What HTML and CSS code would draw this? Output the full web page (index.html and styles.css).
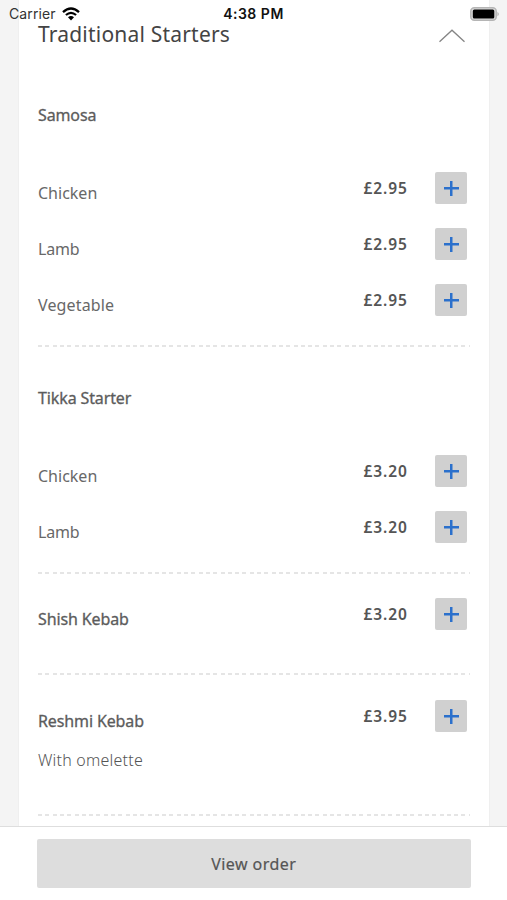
FILE: index.html
```html
<!DOCTYPE html>
<html lang="en">
<head>
<meta charset="utf-8">
<title>Menu</title>
<link rel="stylesheet" href="styles.css">
</head>
<body>
<div class="screen">
  <header class="status">
    <div class="carrier"><span class="carrier-name">Carrier</span>
      <svg class="wifi" viewBox="0 0 18 14" width="18" height="14"><path d="M1 5.2Q9-2.2 17 5.2" fill="none" stroke="#000" stroke-width="2.3"/><path d="M3.9 8Q9 3.6 14.1 8" fill="none" stroke="#000" stroke-width="2.2"/><path d="M6 10.2Q9 7.6 12 10.2L9 13.4Z"/></svg>
    </div>
    <time class="clock">4:38 PM</time>
    <svg class="battery" viewBox="0 0 30 14" width="30" height="14"><rect x=".8" y=".8" width="25.4" height="12.4" rx="3.5" fill="#ddd" stroke="#b5b5b5" stroke-width="1.5"/><rect x="2.8" y="2.6" width="21.5" height="8.8" rx="1.5"/><path d="M27.5 4.7Q30 7 27.5 9.3Z" fill="#aaa"/></svg>
  </header>
  <main class="card">
    <div class="heading"><h1 class="heading-text">Traditional Starters</h1>
      <svg class="chevron" viewBox="0 0 28 14" width="28" height="14"><path d="M1.5 12.8L14 1.2L26.5 12.8" fill="none" stroke="#858585" stroke-width="1.3"/></svg>
    </div>
    <section class="group">
      <h2 class="title">Samosa</h2>
      <div class="row"><span class="name">Chicken</span><span class="price">£2.95</span><button class="add" aria-label="Add"></button></div>
      <div class="row"><span class="name lamb">Lamb</span><span class="price">£2.95</span><button class="add" aria-label="Add"></button></div>
      <div class="row"><span class="name vegetable">Vegetable</span><span class="price">£2.95</span><button class="add" aria-label="Add"></button></div>
    </section>
    <section class="group">
      <h2 class="title">Tikka Starter</h2>
      <div class="row"><span class="name">Chicken</span><span class="price">£3.20</span><button class="add" aria-label="Add"></button></div>
      <div class="row"><span class="name lamb">Lamb</span><span class="price">£3.20</span><button class="add" aria-label="Add"></button></div>
    </section>
    <section class="group single">
      <div class="row"><span class="name strong">Shish Kebab</span><span class="price">£3.20</span><button class="add" aria-label="Add"></button></div>
    </section>
    <section class="group single described">
      <div class="row"><span class="name strong">Reshmi Kebab</span><span class="price">£3.95</span><button class="add" aria-label="Add"></button></div>
      <p class="description">With omelette</p>
    </section>
  </main>
  <footer class="footer"><button class="order">View order</button></footer>
</div>
</body>
</html>
```
FILE: styles.css
```css
* { box-sizing: border-box; }
body { margin: 0; background: #f4f4f4; font-family: "Noto Sans", sans-serif; }
h1, h2, p { margin: 0; font-weight: 400; }
button { border: 0; padding: 0; font: inherit; }
.screen { position: relative; width: 507px; height: 900px; overflow: hidden; display: flex; flex-direction: column; }
.status { position: absolute; inset: 0 0 auto; height: 27px; padding: 0 7px 0 9px; display: grid; grid-template-columns: 1fr auto 1fr; align-items: center; font-family: Inter, sans-serif; color: #111; }
.carrier { display: flex; align-items: center; gap: 6px; }
.carrier-name { font-size: 14px; letter-spacing: .12px; color: #333; }
.clock { font-size: 14px; letter-spacing: .5px; font-weight: 600; margin-right: 2px; }
.battery { justify-self: end; }
.card { flex: none; width: 472px; height: 826px; margin-left: 18px; padding: 0 19px; background: #fff; border: solid #efefef; border-width: 0 1px; overflow: hidden; }
.heading { height: 64px; padding: 18px 4px 0 0; display: flex; justify-content: space-between; align-items: flex-start; color: #444; }
.heading-text { font-size: 21px; letter-spacing: .2px; line-height: 32px; }
.chevron { margin-top: 11px; }
.group { height: 283px; padding-top: 24px; background: repeating-linear-gradient(90deg, #e5e5e5 0 4px, transparent 4px 7.3px) bottom / 100% 2px no-repeat; }
.group + .group { height: 227px; }
.title { height: 54px; margin-bottom: 18px; line-height: 54px; font-size: 16px; letter-spacing: -.12px; color: #5c5c5c; -webkit-text-stroke: .3px #5c5c5c; }
.row { height: 56.2px; padding-right: 3px; display: flex; align-items: center; }
.name { flex: 1; padding-top: 10px; font-size: 16px; line-height: 24px; color: #686868; }
.lamb { letter-spacing: -.2px; }
.vegetable { letter-spacing: .15px; }
.strong { letter-spacing: -.12px; color: #5c5c5c; -webkit-text-stroke: .3px #5c5c5c; }
.price { width: 44px; margin-right: 27.5px; font-size: 15.5px; letter-spacing: .9px; line-height: 26px; font-weight: 600; color: #555; white-space: nowrap; }
.add { width: 32px; height: 32px; border-radius: 2px; background: linear-gradient(#2b70cc, #2b70cc) center / 15px 2.5px no-repeat, linear-gradient(#2b70cc, #2b70cc) center / 2.5px 15px no-repeat, #d0d0d0; }
.group + .single { height: 101px; padding-top: 12px; }
.group + .described { height: 141px; padding-top: 13px; }
.description { font-size: 16px; letter-spacing: .22px; font-weight: 300; line-height: 32px; color: #555; }
.footer { flex: 1; padding: 12px 37px; background: #fff; border-top: 1.5px solid #dedede; }
.order { display: block; width: 433.5px; height: 49px; border-radius: 2px; background: #ddd; color: #555; font-size: 16px; letter-spacing: .45px; -webkit-text-stroke: .2px #555; }
```
